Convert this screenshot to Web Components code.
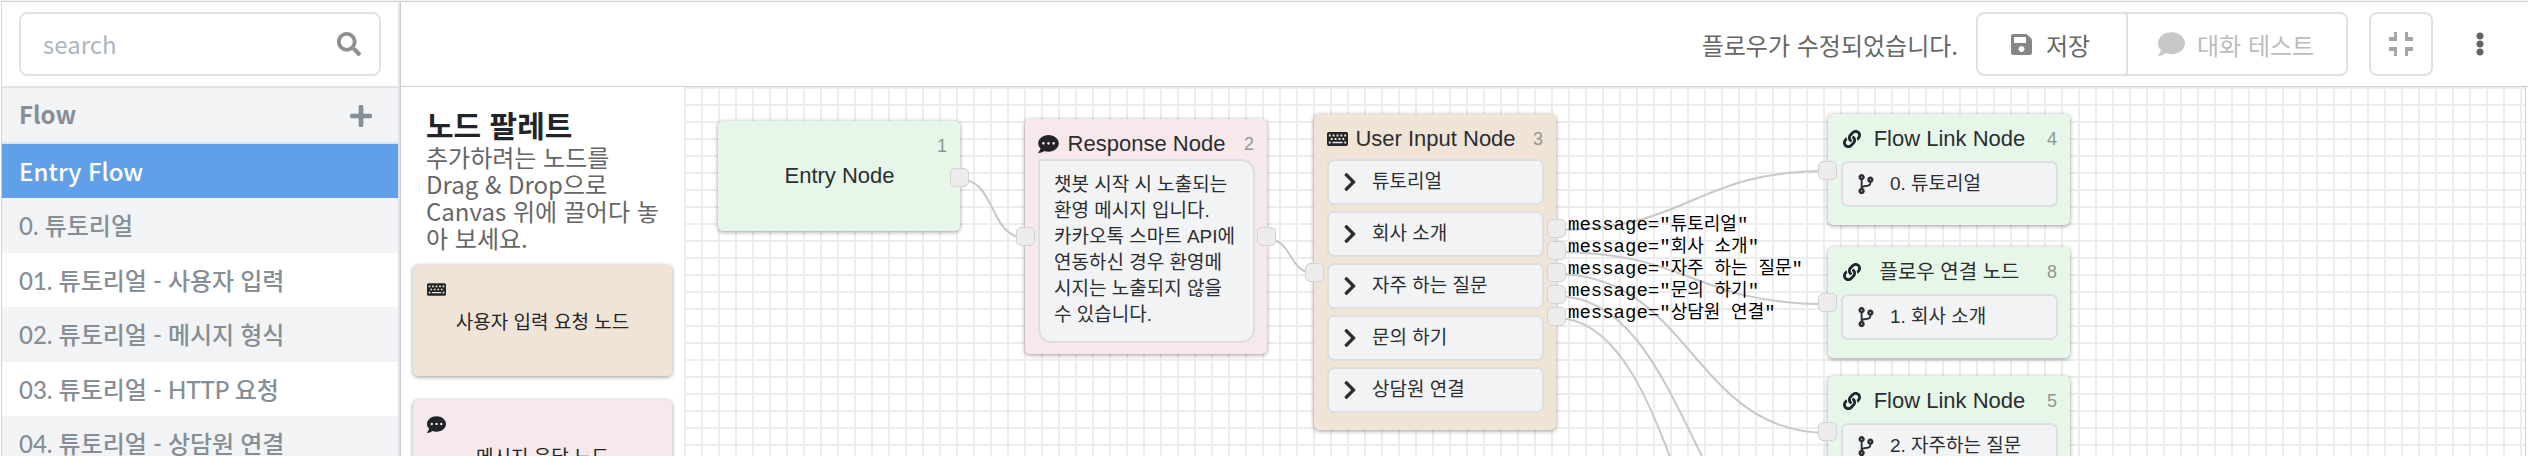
<!DOCTYPE html>
<html lang="ko">
<head>
<meta charset="utf-8">
<title>Flow Editor</title>
<style>
  html, body { margin: 0; height: 100%; }
  body { overflow: hidden; background: #fff; font-family: "Noto Sans CJK KR", sans-serif; color: #666; }
</style>
</head>
<body>
<flow-app></flow-app>
<script>
const ICONS = {
  search: ['0 0 512 512', '<path d="M505 442.7L405.3 343c-4.5-4.5-10.6-7-17-7H372c27.6-35.3 44-79.7 44-128C416 93.1 322.9 0 208 0S0 93.1 0 208s93.1 208 208 208c48.3 0 92.7-16.4 128-44v16.3c0 6.4 2.5 12.5 7 17l99.7 99.7c9.4 9.4 24.6 9.4 33.9 0l28.3-28.3c9.4-9.4 9.4-24.6.1-34zM208 336c-70.7 0-128-57.2-128-128 0-70.7 57.2-128 128-128 70.7 0 128 57.2 128 128 0 70.7-57.2 128-128 128z"/>'],
  plus: ['0 32 448 448', '<path d="M416 208H272V64c0-17.67-14.33-32-32-32h-32c-17.67 0-32 14.33-32 32v144H32c-17.67 0-32 14.33-32 32v32c0 17.67 14.33 32 32 32h144v144c0 17.67 14.33 32 32 32h32c17.67 0 32-14.33 32-32V304h144c17.67 0 32-14.33 32-32v-32c0-17.67-14.33-32-32-32z"/>'],
  save: ['0 32 448 448', '<path d="M433.941 129.941l-83.882-83.882A48 48 0 0 0 316.118 32H48C21.49 32 0 53.49 0 80v352c0 26.51 21.49 48 48 48h352c26.51 0 48-21.49 48-48V163.882a48 48 0 0 0-14.059-33.941zM224 416c-35.346 0-64-28.654-64-64 0-35.346 28.654-64 64-64s64 28.654 64 64c0 35.346-28.654 64-64 64zm96-304.52V212c0 6.627-5.373 12-12 12H76c-6.627 0-12-5.373-12-12V108c0-6.627 5.373-12 12-12h228.52c3.183 0 6.235 1.264 8.485 3.515l3.48 3.48A11.996 11.996 0 0 1 320 111.48z"/>'],
  comment: ['0 32 512 448', '<path d="M256 32C114.6 32 0 125.1 0 240c0 49.6 21.4 95 57 130.7C44.5 421.1 2.7 466 2.2 466.5c-2.2 2.3-2.8 5.7-1.5 8.7S4.8 480 8 480c66.3 0 116-31.8 140.6-51.4 32.7 12.3 69 19.4 107.4 19.4 141.4 0 256-93.1 256-208S397.4 32 256 32z"/>'],
  dots: ['0 32 512 448', '<path fill-rule="evenodd" d="M256 32C114.6 32 0 125.1 0 240c0 49.6 21.4 95 57 130.7C44.5 421.1 2.7 466 2.2 466.5c-2.2 2.3-2.8 5.7-1.5 8.7S4.8 480 8 480c66.3 0 116-31.8 140.6-51.4 32.7 12.3 69 19.4 107.4 19.4 141.4 0 256-93.1 256-208S397.4 32 256 32zM128 272a32 32 0 1 1 0-64 32 32 0 0 1 0 64zm128 0a32 32 0 1 1 0-64 32 32 0 0 1 0 64zm128 0a32 32 0 1 1 0-64 32 32 0 0 1 0 64z"/>'],
  keyboard: ['0 0 576 384', '<path fill-rule="evenodd" d="M48 0h480a48 48 0 0 1 48 48v288a48 48 0 0 1-48 48H48a48 48 0 0 1-48-48V48A48 48 0 0 1 48 0zM50 70h52v52H50zm106 0h52v52h-52zm106 0h52v52h-52zm106 0h52v52h-52zm106 0h52v52h-52zM103 166h52v52h-52zm106 0h52v52h-52zm106 0h52v52h-52zm106 0h52v52h-52zM50 262h52v52H50zm98 6h280v40H148zm326-6h52v52h-52z"/>'],
  link: ['0 0 512 512', '<path d="M326.612 185.391c59.747 59.809 58.927 155.698.36 214.59-.11.12-.24.25-.36.37l-67.2 67.2c-59.27 59.27-155.699 59.262-214.96 0-59.27-59.26-59.27-155.7 0-214.96l37.106-37.106c9.84-9.84 26.786-3.3 27.294 10.606.648 17.722 3.826 35.527 9.69 52.721 1.986 5.822.567 12.262-3.783 16.612l-13.087 13.087c-28.026 28.026-28.905 73.66-1.155 101.96 28.024 28.579 74.086 28.749 102.325.51l67.2-67.19c28.191-28.191 28.073-73.757 0-101.83-3.701-3.694-7.429-6.564-10.341-8.569a16.037 16.037 0 0 1-6.947-12.606c-.396-10.567 3.348-21.456 11.698-29.806l21.054-21.055c5.521-5.521 14.182-6.199 20.584-1.731a152.482 152.482 0 0 1 20.522 17.197zM467.547 44.449c-59.261-59.262-155.69-59.27-214.96 0l-67.2 67.2c-.12.12-.25.25-.36.37-58.566 58.892-59.387 154.781.36 214.59a152.454 152.454 0 0 0 20.521 17.196c6.402 4.468 15.064 3.789 20.584-1.731l21.054-21.055c8.35-8.35 12.094-19.239 11.698-29.806a16.037 16.037 0 0 0-6.947-12.606c-2.912-2.005-6.64-4.875-10.341-8.569-28.073-28.073-28.191-73.639 0-101.83l67.2-67.19c28.239-28.239 74.3-28.069 102.325.51 27.75 28.3 26.872 73.934-1.155 101.96l-13.087 13.087c-4.35 4.35-5.769 10.79-3.783 16.612 5.864 17.194 9.042 34.999 9.69 52.721.509 13.906 17.454 20.446 27.294 10.606l37.106-37.106c59.271-59.259 59.271-155.699.001-214.959z"/>'],
  branch: ['0 0 384 512', '<path d="M384 144c0-44.2-35.8-80-80-80s-80 35.8-80 80c0 36.4 24.3 67.1 57.5 76.8-.6 16.1-4.2 28.5-11 36.9-15.4 19.2-49.3 22.4-85.2 25.7-28.2 2.6-57.4 5.4-81.3 16.9v-144c32.5-10.2 56-40.5 56-76.3 0-44.2-35.8-80-80-80S0 35.8 0 80c0 35.8 23.5 66.1 56 76.3v199.3C23.5 365.9 0 396.2 0 432c0 44.2 35.8 80 80 80s80-35.8 80-80c0-34-21.2-63.1-51.2-74.6 3.1-5.2 7.8-9.8 14.9-13.4 16.2-8.2 40.4-10.4 66.1-12.8 42.2-3.9 90-8.4 118.2-43.4 14-17.4 21.1-39.8 21.6-67.9 31.6-10.8 54.4-40.7 54.4-75.9zM80 64c8.8 0 16 7.2 16 16s-7.2 16-16 16-16-7.2-16-16 7.2-16 16-16zm0 384c-8.8 0-16-7.2-16-16s7.2-16 16-16 16 7.2 16 16-7.2 16-16 16zm224-320c8.8 0 16 7.2 16 16s-7.2 16-16 16-16-7.2-16-16 7.2-16 16-16z"/>'],
  chevron: ['27 37 266 438', '<path d="M285.476 272.971L91.132 467.314c-9.373 9.373-24.569 9.373-33.941 0l-22.667-22.667c-9.357-9.357-9.375-24.522-.04-33.901L188.505 256 34.484 101.255c-9.335-9.379-9.317-24.544.04-33.901l22.667-22.667c9.373-9.373 24.569-9.373 33.941 0L285.475 239.03c9.373 9.372 9.373 24.568.001 33.941z"/>'],
  compress: ['0 0 24 24', '<path d="M5 0h3v9H0V5h5zM16 0h3v5h5v4h-8zM0 15h8v9H5v-5H0zM16 15h8v4h-5v5h-3z"/>'],
  more: ['0 0 8 24', '<circle cx="4" cy="4" r="3.5"/><circle cx="4" cy="12" r="3.5"/><circle cx="4" cy="20" r="3.5"/>']
};

/* Registers an element whose open shadow root is built from render(element). */
function define(name, render) {
  customElements.define(name, class extends HTMLElement {
    connectedCallback() {
      if (this.shadowRoot) return;
      const template = document.createElement('template');
      template.innerHTML = render(this);
      this.attachShadow({ mode: 'open' }).append(template.content.cloneNode(true));
    }
  });
}

define('ui-icon', el => {
  const [box, shape] = ICONS[el.getAttribute('name')];
  return `<style>
    :host { display: inline-flex; flex: none; }
    svg { display: block; width: 100%; height: 100%; fill: currentColor; }
  </style><svg viewBox="${box}" aria-hidden="true">${shape}</svg>`;
});

define('search-box', () => `<style>
    :host { display: block; padding: 10px 17px; height: 64px; }
    form { display: flex; align-items: center; box-sizing: border-box; height: 64px; padding: 0 18px 0 22px; border: 2px solid #e1e3e5; border-radius: 8px; }
    input { flex: 1; min-width: 0; padding: 0 0 2px; border: 0; outline: 0; background: none; font: 24px "Noto Sans CJK KR", sans-serif; color: #495057; }
    input::placeholder { color: #adb5bd; opacity: 1; }
    button { padding: 0; border: 0; background: none; color: #8e8e8e; display: flex; }
    ui-icon { width: 24px; height: 24px; }
  </style>
  <form><input type="search" placeholder="search" aria-label="search"><button type="button" aria-label="Search"><ui-icon name="search"></ui-icon></button></form>`);

define('flow-item', el => `<style>
    :host { display: block; height: 54px; background: #fff; }
    :host(:nth-child(even)) { height: 55px; background: #f1f3f5; }
    :host([active]) { background: #61a0e8; }
    a { display: flex; align-items: center; box-sizing: border-box; height: 100%; padding: 0 17px 2px; color: #868e96; text-decoration: none; white-space: nowrap;
        font: 500 24px Lato, "Noto Sans CJK KR", sans-serif; }
    :host([active]) a { color: #fff; font-family: "Noto Sans CJK KR", sans-serif; }
  </style><a href="#"><slot></slot></a>`);

define('side-bar', () => `<style>
    :host { display: flex; flex-direction: column; width: 396px; flex: none; border-left: 1px solid #d4d4d5; border-right: 2px solid #dfe2e6; background: #fff; overflow: hidden; }
    header { display: flex; align-items: center; justify-content: space-between; box-sizing: border-box; height: 58px; padding: 0 26px 0 17px;
      background: #f1f3f5; border-top: 2px solid #dfe3e6; border-bottom: 2px solid #dfe3e6; color: #868e96; flex: none; }
    h2 { margin: 0; padding-bottom: 2px; font-size: 24px; line-height: 36px; font-weight: 700; }
    button { display: flex; padding: 2px 0 0; border: 0; background: none; color: inherit; }
    ui-icon { width: 22px; height: 22px; }
  </style>
  <search-box></search-box>
  <header><h2>Flow</h2><button type="button" aria-label="Add flow"><ui-icon name="plus"></ui-icon></button></header>
  <nav>
    <flow-item active>Entry Flow</flow-item><flow-item>0. 튜토리얼</flow-item><flow-item>01. 튜토리얼 - 사용자 입력</flow-item><flow-item>02. 튜토리얼 - 메시지 형식</flow-item><flow-item>03. 튜토리얼 - HTTP 요청</flow-item><flow-item>04. 튜토리얼 - 상담원 연결</flow-item>
  </nav>`);

define('top-bar', () => `<style>
    :host { display: flex; align-items: center; justify-content: flex-end; box-sizing: border-box; height: 85px; padding: 0 44px 0 0; border-bottom: 1px solid #d0d0d0; flex: none; }
    p { margin: 0 18px 0 0; font-size: 24px; white-space: nowrap; }
    button { display: flex; align-items: center; box-sizing: border-box; height: 64px; border: 2px solid #e1e1e1; background: #fff; color: #666;
      font: 24px "Noto Sans CJK KR", sans-serif; white-space: nowrap; }
    .save { width: 152px; padding: 0 0 0 33px; gap: 14px; border-radius: 8px 0 0 8px; }
    .test { width: 222px; margin-left: -2px; padding: 0 0 0 30px; gap: 12px; border-radius: 0 8px 8px 0; color: #bcbcbc; }
    .fit { width: 64px; margin-left: 21px; padding: 0; justify-content: center; border-radius: 8px; color: #a6a6a6; }
    .more { margin-left: 43px; padding: 0; border: 0; }
    .save ui-icon { width: 21px; height: 21px; color: #868686; }
    .test ui-icon { width: 27px; height: 24px; color: #c8c8c8; }
    .fit ui-icon { width: 24px; height: 24px; }
    .more ui-icon { width: 8px; height: 24px; }
  </style>
  <p role="status">플로우가 수정되었습니다.</p>
  <button class="save" type="button"><ui-icon name="save"></ui-icon>저장</button>
  <button class="test" type="button" disabled><ui-icon name="comment"></ui-icon>대화 테스트</button>
  <button class="fit" type="button" aria-label="Exit full screen"><ui-icon name="compress"></ui-icon></button>
  <button class="more" type="button" aria-label="More"><ui-icon name="more"></ui-icon></button>`);

define('palette-card', el => `<style>
    :host { display: grid; grid-template-rows: 1fr 28px 1fr; box-sizing: border-box; flex: none; height: 111px; padding: 0 14px; border-radius: 5px; background: var(--tone); color: #212529;
      box-shadow: 0 1px 4px rgba(0,0,0,.4); font-size: 19px; line-height: 28px; }
    ui-icon { width: 19px; height: 17px; margin-top: 16px; }
    span { text-align: center; white-space: nowrap; }
  </style><ui-icon name="${el.getAttribute('icon')}"></ui-icon><span><slot></slot></span>`);

define('node-palette', () => `<style>
    :host { display: flex; flex-direction: column; box-sizing: border-box; width: 283px; flex: none; padding: 18px 12px 0; gap: 24px; overflow: hidden; }
    section { flex: none; padding: 0 13px; margin-bottom: -10px; white-space: nowrap; }
    h1 { margin: 0; color: #212529; font-size: 30px; line-height: 38px; font-weight: 700; }
    p { margin: 0; font-size: 24px; line-height: 27px; }
  </style>
  <section><h1>노드 팔레트</h1><p>추가하려는 노드를<br>Drag &amp; Drop으로<br>Canvas 위에 끌어다 놓<br>아 보세요.</p></section>
  <palette-card icon="keyboard" style="--tone:#f0e4d7">사용자 입력 요청 노드</palette-card>
  <palette-card icon="dots" style="--tone:#f7e8eb">메시지 응답 노드</palette-card>`);

define('node-port', () => `<style>
    :host { position: absolute; box-sizing: border-box; width: 19px; height: 19px; border: 1px solid #d2d2d2; border-radius: 5px; background: #ececec; }
  </style>`);

define('node-item', el => `<style>
    :host { display: flex; align-items: center; box-sizing: border-box; height: 46px; padding: 0 15px; border: 2px solid #dcdee0; border-radius: 7px; background: #f1f3f5;
      font-size: 19px; line-height: 28px; white-space: nowrap; }
    ui-icon { width: ${el.getAttribute('icon') === 'branch' ? 16 : 12}px; height: ${el.getAttribute('icon') === 'branch' ? 20 : 18}px; margin-right: 16px; }
  </style><ui-icon name="${el.getAttribute('icon')}"></ui-icon><span><slot></slot></span>`);

define('flow-node', el => {
  const icon = el.getAttribute('icon');
  const label = el.getAttribute('label');
  const plain = el.hasAttribute('plain');
  return `<style>
    :host { position: absolute; box-sizing: border-box; width: 242px; padding: 0 12px 0 13px; border-radius: 5px; background: var(--tone); color: #2c2e30;
      box-shadow: 0 1px 4px rgba(0,0,0,.4); font-family: "Liberation Sans", "Noto Sans CJK KR", sans-serif; }
    header { display: grid; grid-template: 50px / 21px 1fr 21px; align-items: center; height: var(--head, 50px); white-space: nowrap; }
    h3 { margin: 0 -6px; font-size: 22px; line-height: 28px; font-weight: 400; text-align: center; }
    :host([lang="ko"]) h3 { font-size: 20px; }
    small { font-size: 18px; line-height: 24px; text-align: right; color: #8f9792; padding-right: 1px; }
    ui-icon { width: ${icon === 'link' ? 18 : 21}px; height: 18px; justify-self: center; color: #212529; }
    .body { display: flex; flex-direction: column; gap: 6px; }
    :host([plain]) h3 { margin-top: -9px; }
  </style>
  <header>${icon ? `<ui-icon name="${icon}"></ui-icon>` : '<i></i>'}${plain ? '<i></i>' : `<h3>${label}</h3>`}<small>${el.getAttribute('number')}</small></header>
  ${plain ? `<h3>${label}</h3>` : ''}
  <div class="body"><slot></slot></div>`;
});

define('message-text', () => `<style>
    :host { display: block; box-sizing: border-box; height: 184px; padding: 11px 0 0 14px; border: 2px solid #dcdee0; border-radius: 0 14px 14px 14px; background: #f1f3f5;
      font-size: 19px; line-height: 26px; white-space: nowrap; }
  </style><slot></slot>`);

define('link-label', () => `<style>
    :host { position: absolute; color: #000; font: 19px/22px "Liberation Mono", "Noto Sans CJK KR", monospace; white-space: nowrap; }
    span { font-size: 18px; }
  </style>message="<span><slot></slot></span>"`);

define('flow-canvas', () => {
  /* Each wire: start x, start y, end x, end y, reach of its control points. */
  const wires = [[275,92,342,151,38],[583,152,630,186,26],[872,143,1144,84,135],[872,165,1144,217,135],[872,187,1144,346,135],[872,209,1144,489,135],[872,231,1144,635,135]];
  const paths = wires.map(([a, b, c, d, r]) => `<path d="M${a} ${b}C${a + r} ${b} ${c - r} ${d} ${c} ${d}"/>`).join('');
  return `<style>
    :host { display: block; position: relative; flex: 1; min-width: 0; overflow: hidden; border-right: 1px solid #d4d4d5; margin-right: 2px;
      background: linear-gradient(#ededed 2px, transparent 2px) 0 0 / 17px 17px, linear-gradient(90deg, #ededed 2px, transparent 2px) 0 0 / 17px 17px, #fff; }
    svg { position: absolute; inset: 0; width: 100%; height: 100%; fill: none; stroke: #c8c8c8; stroke-width: 2px; }
    .green { --tone: #e6f7ea; --head: 47px; } .pink { --tone: #f7e8eb; --head: 40px; } .sand { --tone: #f0e4d7; --head: 45px; }
    [plain] { --head: 50px; }
  </style>
  <flow-node class="green" plain label="Entry Node" number="1" style="left:34px;top:34px;height:110px;--head:50px"></flow-node>
  <flow-node class="pink" icon="dots" label="Response Node" number="2" style="left:341px;top:32px;height:235px">
    <message-text>챗봇 시작 시 노출되는<br>환영 메시지 입니다.<br>카카오톡 스마트 API에<br>연동하신 경우 환영메<br>시지는 노출되지 않을<br>수 있습니다.</message-text></flow-node>
  <flow-node class="sand" icon="keyboard" label="User Input Node" number="3" style="left:630px;top:27px;height:316px">
    <node-item icon="chevron">튜토리얼</node-item><node-item icon="chevron">회사 소개</node-item><node-item icon="chevron">자주 하는 질문</node-item><node-item icon="chevron">문의 하기</node-item><node-item icon="chevron">상담원 연결</node-item></flow-node>
  <flow-node class="green" icon="link" label="Flow Link Node" number="4" style="left:1144px;top:27px;height:111px"><node-item icon="branch">0. 튜토리얼</node-item></flow-node>
  <flow-node class="green" icon="link" lang="ko" label="플로우 연결 노드" number="8" style="left:1144px;top:160px;height:111px"><node-item icon="branch">1. 회사 소개</node-item></flow-node>
  <flow-node class="green" icon="link" label="Flow Link Node" number="5" style="left:1144px;top:289px;height:111px"><node-item icon="branch">2. 자주하는 질문</node-item></flow-node>
  <svg aria-hidden="true">${paths}</svg>
  ${[[266,81],[332,140],[573,140],[621,176],[863,132],[863,154],[863,176],[863,198],[863,220],[1134,74],[1134,206],[1134,335]].map(([x, y]) => `<node-port style="left:${x}px;top:${y}px"></node-port>`).join('')}
  ${['튜토리얼','회사 소개','자주 하는 질문','문의 하기','상담원 연결'].map((t, i) => `<link-label style="left:884px;top:${127 + i * 22}px">${t}</link-label>`).join('')}`;
});

define('flow-app', () => `<style>
    :host { display: flex; box-sizing: border-box; height: 100vh; padding-left: 1px; border-top: 1px solid #f4f4f4; }
    side-bar, main { border-top: 1px solid #d0d0d0; }
    main { flex: 1; min-width: 0; display: flex; flex-direction: column; border-left: 1px solid #ccc; }
    .work { flex: 1; min-height: 0; display: flex; }
  </style>
  <side-bar></side-bar>
  <main><top-bar></top-bar><div class="work"><node-palette></node-palette><flow-canvas></flow-canvas></div></main>`);
</script>
</body>
</html>
